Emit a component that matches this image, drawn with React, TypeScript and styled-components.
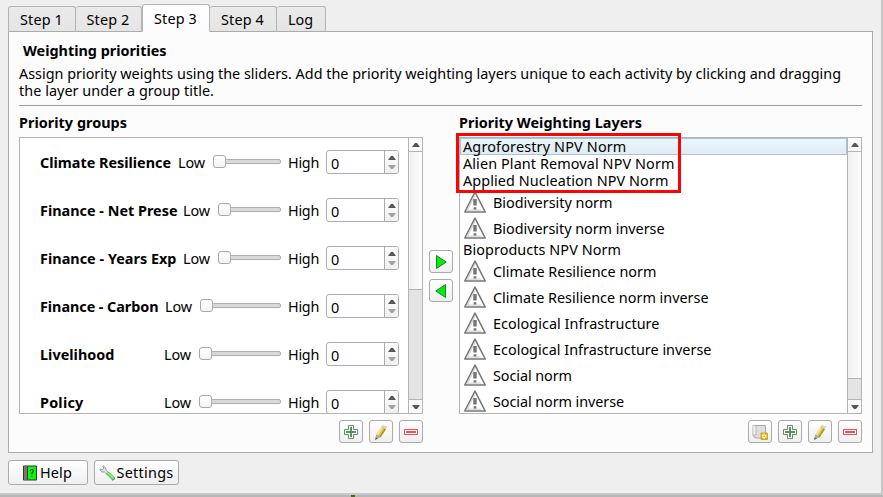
import React, { useLayoutEffect, useRef, useState } from "react";
import styled, { createGlobalStyle } from "styled-components";

const GlobalStyle = createGlobalStyle`
  * { box-sizing: border-box; }
  body { margin: 0; background: #efefef; overflow: hidden; }
  button { padding: 0; font: inherit; color: inherit; }
`;

const Window = styled.div`
  width: 883px;
  height: 497px;
  display: flex;
  flex-direction: column;
  background: #efefef;
  border-right: 2px solid #c6c6c6;
  color: #000;
  font-family: "Noto Sans", "Open Sans", sans-serif;
  font-size: 14.4px;
  line-height: 17px;
`;

const TextSpan = styled.span<{ $bold?: boolean }>`
  display: inline-block;
  flex: none;
  white-space: pre;
  font-weight: ${(p) => (p.$bold ? 700 : 400)};
`;

/* Tracks its text so that the line takes the given width. */
function Label({ text, width, bold }: { text: string; width: number; bold?: boolean }) {
  const ref = useRef<HTMLSpanElement>(null);
  const [spacing, setSpacing] = useState(0);
  useLayoutEffect(() => {
    if (ref.current) {
      const natural = ref.current.getBoundingClientRect().width;
      setSpacing((width - natural) / text.length);
    }
  }, [text, width]);
  return (
    <TextSpan ref={ref} $bold={bold} style={{ letterSpacing: spacing }}>
      {text}
    </TextSpan>
  );
}

const TabBar = styled.nav`
  display: flex;
  align-items: flex-end;
  height: 32px;
  padding-left: 8px;
  flex: none;
  margin-bottom: -1px;
`;

const Tab = styled.div<{ $w: number; $active?: boolean; $first?: boolean }>`
  width: ${(p) => p.$w}px;
  height: ${(p) => (p.$active ? 28 : 26)}px;
  padding: ${(p) => (p.$active ? 5 : 4)}px 1px 0 0;
  display: flex;
  justify-content: center;
  align-items: flex-start;
  border: 1px solid #b4b4b4;
  border-left-width: ${(p) => (p.$first || p.$active ? 1 : 0)}px;
  border-bottom-color: ${(p) => (p.$active ? "#fcfcfc" : "#ababab")};
  border-radius: 3px 3px 0 0;
  background: ${(p) => (p.$active ? "linear-gradient(#fff, #fcfcfc)" : "linear-gradient(#eaeaea, #e5e5e5)")};
  z-index: 1;
`;

const Panel = styled.main`
  width: 865px;
  height: 422px;
  flex: none;
  margin-left: 8px;
  padding: 10px 10px 0;
  border: 1px solid #ababab;
  background: #fcfcfc;
  display: flex;
  flex-direction: column;
`;

const Title = styled.h1`
  margin: 0 0 6px 4px;
  font-size: inherit;
  height: 17px;
`;

const Description = styled.p`
  margin: 0;
  display: flex;
  flex-direction: column;
  align-items: flex-start;
  height: 41px;
  border-bottom: 1px solid #9c9c9c;
`;

const Columns = styled.div`
  display: flex;
  margin-top: 8px;
`;

const Column = styled.section<{ $w: number }>`
  width: ${(p) => p.$w}px;
  flex: none;
`;

const Heading = styled.h2`
  margin: 0;
  height: 23px;
  font-size: inherit;
`;

const ListFrame = styled.div`
  display: flex;
  height: 277px;
  border: 1px solid #b4b4b4;
  background: #fff;
  overflow: hidden;
`;

const ListBody = styled.div`
  flex: 1;
  min-width: 0;
  overflow: hidden;
`;

const GroupRow = styled.div`
  height: 48px;
  padding-left: 20px;
  display: flex;
  align-items: center;
`;

const GroupName = styled.div<{ $w: number }>`
  width: ${(p) => p.$w}px;
  flex: none;
`;

const Slider = styled.div`
  flex: 1;
  display: flex;
  align-items: center;
  height: 13px;
  margin: -1px 7px 0 8px;
`;

const Knob = styled.div`
  width: 13px;
  height: 13px;
  flex: none;
  border: 1px solid #a8a8a8;
  border-radius: 3px;
  background: linear-gradient(#fff, #f3f3f3);
`;

const Track = styled.div`
  flex: 1;
  height: 5px;
  margin-left: -1px;
  border: 1px solid #b0b0b0;
  border-radius: 0 2px 2px 0;
  background: #d9d9d9;
`;

const Spin = styled.div`
  display: flex;
  width: 73px;
  height: 24px;
  flex: none;
  margin: 0 9px 0 7px;
  border: 1px solid #acacac;
  border-radius: 3px;
  background: #fff;
  overflow: hidden;
`;

const SpinValue = styled.div`
  flex: 1;
  padding: 4px 0 0 4px;
`;

const SpinButtons = styled.div`
  width: 14px;
  border-left: 1px solid #acacac;
  background: linear-gradient(#fdfdfd, #f0f0f0);
  display: flex;
  flex-direction: column;
  align-items: center;
  gap: 5px;
  padding-top: 5px;
`;

const Scroll = styled.div`
  width: 14px;
  flex: none;
  border-left: 1px solid #b4b4b4;
  display: flex;
  flex-direction: column;
  background: #e4e4e4;
`;

const ScrollButton = styled.div`
  height: 14px;
  flex: none;
  display: flex;
  align-items: center;
  justify-content: center;
  background: #fbfbfb;
  &:first-child { border-bottom: 1px solid #b4b4b4; }
  &:last-child { border-top: 1px solid #b4b4b4; }
`;

const Thumb = styled.div<{ $h: number }>`
  height: ${(p) => p.$h}px;
  border-bottom: 1px solid #b4b4b4;
  background: linear-gradient(90deg, #f0f0f0, #fdfdfd);
`;

const Trough = styled.div`
  flex: 1;
`;

const ToolRow = styled.div`
  display: flex;
  justify-content: flex-end;
  gap: 6px;
  margin-top: 6px;
`;

const Button = styled.button<{ $w?: number; $h?: number }>`
  width: ${(p) => p.$w ?? 24}px;
  height: ${(p) => p.$h ?? 23}px;
  flex: none;
  display: flex;
  align-items: center;
  justify-content: center;
  border: 1px solid #aaa;
  border-radius: 3px;
  background: linear-gradient(#fff, #efefef);
`;

const Transfer = styled.div`
  width: 36px;
  flex: none;
  padding: 136px 0 0 6px;
  display: flex;
  flex-direction: column;
  gap: 6px;
`;

const LayerColumn = styled(Column)`
  position: relative;
`;

const Highlight = styled.div`
  position: absolute;
  left: -3px;
  top: 19px;
  width: 225px;
  height: 60px;
  border: 3px solid #fa0505;
`;

const LayerRow = styled.div<{ $icon?: boolean; $selected?: boolean }>`
  height: ${(p) => (p.$icon ? 26 : 17)}px;
  display: flex;
  align-items: center;
  gap: 6px;
  padding-left: ${(p) => (p.$selected ? 2 : 3)}px;
  border: ${(p) => (p.$selected ? "1px solid #abc3d6" : "none")};
  background: ${(p) => (p.$selected ? "linear-gradient(#e8f6ff, #e2ebf2)" : "none")};
`;

const Footer = styled.footer`
  display: flex;
  gap: 6px;
  height: 40px;
  padding: 7px 0 0 8px;
`;

const FooterContent = styled.span`
  display: flex;
  align-items: center;
  gap: 2px;
  margin-right: 1px;
`;

const WindowEdge = styled.div`
  height: 4px;
  flex: none;
  width: 883px;
  border-top: 2px solid #c8c8c8;
  background: #b7b7b7;
  padding-left: 351px;
`;

const EdgeMark = styled.div`
  width: 4px;
  height: 2px;
  background: #4c6a14;
`;

const Arrow = ({ down, dim }: { down?: boolean; dim?: boolean }) => (
  <svg width="8" height="4" viewBox="0 0 8 4">
    <path d={down ? "M0 0H8L5 4H3Z" : "M0 4H8L5 0H3Z"} fill={dim ? "#a0a0a0" : "#555"} />
  </svg>
);

const WarningIcon = () => (
  <svg width="24" height="24" viewBox="0 0 24 24">
    <path d="M12 2.2 22.2 22H1.8Z" fill="#fff" stroke="#777" strokeWidth="1.6" strokeLinejoin="round" />
    <path d="M12 5.2 4.3 20.2H18" fill="none" stroke="#d5d5d5" strokeWidth="1.2" />
    <path d="M10.3 9H13.7V15.5H10.3Z M10.6 17.2H13.4V19.6H10.6Z" fill="#757575" />
  </svg>
);

const PlusIcon = () => (
  <svg width="16" height="16" viewBox="0 0 16 16">
    <path d="M5.5 1.5H10.5V5.5H14.5V10.5H10.5V14.5H5.5V10.5H1.5V5.5H5.5Z" fill="#fff" stroke="#5b905b" />
    <path d="M7 3H9V7H13V9H9V13H7V9H3V7H7Z" fill="#5b905b" />
  </svg>
);

const MinusIcon = () => (
  <svg width="16" height="16" viewBox="0 0 16 16">
    <rect x="1.5" y="5.5" width="13" height="5" fill="#fff" stroke="#f05050" />
    <rect x="3" y="7" width="10" height="2" fill="#f05050" />
  </svg>
);

const PencilIcon = () => (
  <svg width="16" height="16" viewBox="0 0 16 16">
    <path d="M9.8 1.2 14 2.8 7.4 13 2.2 16 3.2 10.8Z" fill="#d8c64b" />
    <path d="M9.8 1.2 14 2.8 13 4.7 8.7 2.9Z" fill="#d9d5cf" />
    <path d="M9 4 4.2 11.3" stroke="#f4eaa0" strokeWidth="1.5" />
    <path d="M12.3 5 7 13" stroke="#a99422" strokeWidth="1.4" />
    <path d="M3.2 10.8 5 11.2 7.4 13 2.2 16Z" fill="#aaa" />
    <path d="M2.8 13.4 4.8 14.6 2.2 16Z" fill="#666" />
  </svg>
);

const LayerIcon = () => (
  <svg width="16" height="16" viewBox="0 0 16 16">
    <path d="M1 1.5H13.5V14H4.5Q1.5 14 1 11Z" fill="#dedede" stroke="#aaa" />
    <path d="M1 1.5H4V11H1.5" fill="#eee" stroke="#b7b7b7" />
    <rect x="8.5" y="8.5" width="7.5" height="7.5" rx="1" fill="#cfa914" />
    <path d="M12.2 9.6V14.8M9.9 10.9 14.5 13.5M9.9 13.5 14.5 10.9" stroke="#fff7cc" strokeWidth="1.3" />
    <circle cx="12.2" cy="12.2" r=".8" fill="#cfa914" />
  </svg>
);

const TransferIcon = ({ left }: { left?: boolean }) => (
  <svg width="16" height="16" viewBox="0 0 16 16">
    <path d={left ? "M12.5 1.5V14.5L2.8 8Z" : "M3.5 1.5V14.5L13.2 8Z"} fill="#00ed10" stroke="#168a1c" />
  </svg>
);

const HelpIcon = () => (
  <svg width="15" height="16" viewBox="0 0 15 16">
    <path d="M.5 1H13.5V15H.5Z" fill="#06f910" stroke="#333" />
    <path d="M1 1.5H4V14.5H1Z" fill="#85736b" />
    <path d="M4.5 1V15" stroke="#3c443c" />
    <path d="M7.2 6Q7.2 4.5 8.8 4.5T10.4 6Q10.4 7 9.5 7.6Q8.8 8 8.8 9.3" fill="none" stroke="#174a19" strokeWidth="1.2" />
    <path d="M8.2 10.5H9.5V11.8H8.2Z" fill="#174a19" />
  </svg>
);

const WrenchIcon = () => (
  <svg width="16" height="16" viewBox="0 0 16 16">
    <path d="M1.2 5.3Q2.5 7.8 5.3 6.9L9.3 10.5 10.9 8.9 7 5.2Q7.4 2.2 4.4 1L3.7 1.4 4.9 3.2 3.3 4.9 1.2 4Z" fill="#e8e8e8" stroke="#909090" strokeWidth=".9" />
    <path d="M7 8.8 9.5 6.4 16 12.5Q15.6 15 13.4 15.4Z" fill="#55cf4d" />
    <path d="M8.8 8 14.6 13.3" stroke="#9af28e" strokeWidth="1.2" />
    <path d="M13.4 15.2Q15.5 14.8 15.8 12.7" fill="none" stroke="#4b8b46" />
  </svg>
);

const ScrollBar = ({ thumb }: { thumb: number }) => (
  <Scroll>
    <ScrollButton><Arrow /></ScrollButton>
    <Thumb $h={thumb} />
    <Trough />
    <ScrollButton><Arrow down /></ScrollButton>
  </Scroll>
);

const tabs = [
  { text: "Step 1", width: 43, box: 68, first: true },
  { text: "Step 2", width: 43, box: 66 },
  { text: "Step 3", width: 43, box: 68, active: true },
  { text: "Step 4", width: 43, box: 67 },
  { text: "Log", width: 25, box: 49 },
];

const groups = [
  { text: "Climate Resilience", width: 131, column: 138 },
  { text: "Finance - Net Prese", width: 137.5, column: 143 },
  { text: "Finance - Years Exp", width: 136.5, column: 143 },
  { text: "Finance - Carbon", width: 118.5, column: 125 },
  { text: "Livelihood", width: 74.5, column: 124 },
  { text: "Policy", width: 43.5, column: 124 },
];

const layers = [
  { text: "Agroforestry NPV Norm", width: 163.5, selected: true },
  { text: "Alien Plant Removal NPV Norm", width: 211.5 },
  { text: "Applied Nucleation NPV Norm", width: 205.5 },
  { text: "Biodiversity norm", width: 119.5, icon: true },
  { text: "Biodiversity norm inverse", width: 171.5, icon: true },
  { text: "Bioproducts NPV Norm", width: 158 },
  { text: "Climate Resilience norm", width: 163.5, icon: true },
  { text: "Climate Resilience norm inverse", width: 215.5, icon: true },
  { text: "Ecological Infrastructure", width: 166.5, icon: true },
  { text: "Ecological Infrastructure inverse", width: 218.5, icon: true },
  { text: "Social norm", width: 79, icon: true },
  { text: "Social norm inverse", width: 131, icon: true },
];

export default function App() {
  return (
    <>
      <GlobalStyle />
      <Window>
        <TabBar>
          {tabs.map((t) => (
            <Tab key={t.text} $w={t.box} $active={t.active} $first={t.first}>
              <Label text={t.text} width={t.width} />
            </Tab>
          ))}
        </TabBar>
        <Panel>
          <Title><Label bold text="Weighting priorities" width={143.5} /></Title>
          <Description>
            <Label text="Assign priority weights using the sliders. Add the priority weighting layers unique to each activity by clicking and dragging" width={822} />
            <Label text="the layer under a group title." width={195} />
          </Description>
          <Columns>
            <Column $w={404}>
              <Heading><Label bold text="Priority groups" width={108} /></Heading>
              <ListFrame>
                <ListBody>
                  {groups.map((g) => (
                    <GroupRow key={g.text}>
                      <GroupName $w={g.column}><Label bold text={g.text} width={g.width} /></GroupName>
                      <Label text="Low" width={27} />
                      <Slider><Knob /><Track /></Slider>
                      <Label text="High" width={31} />
                      <Spin>
                        <SpinValue>0</SpinValue>
                        <SpinButtons><Arrow /><Arrow down dim /></SpinButtons>
                      </Spin>
                    </GroupRow>
                  ))}
                </ListBody>
                <ScrollBar thumb={138} />
              </ListFrame>
              <ToolRow>
                <Button><PlusIcon /></Button>
                <Button><PencilIcon /></Button>
                <Button><MinusIcon /></Button>
              </ToolRow>
            </Column>
            <Transfer>
              <Button><TransferIcon /></Button>
              <Button><TransferIcon left /></Button>
            </Transfer>
            <LayerColumn $w={403}>
              <Heading><Label bold text="Priority Weighting Layers" width={183} /></Heading>
              <ListFrame>
                <ListBody>
                  {layers.map((l) => (
                    <LayerRow key={l.text} $icon={l.icon} $selected={l.selected}>
                      {l.icon && <WarningIcon />}
                      <Label text={l.text} width={l.width} />
                    </LayerRow>
                  ))}
                </ListBody>
                <ScrollBar thumb={227} />
              </ListFrame>
              <ToolRow>
                <Button><LayerIcon /></Button>
                <Button><PlusIcon /></Button>
                <Button><PencilIcon /></Button>
                <Button><MinusIcon /></Button>
              </ToolRow>
              <Highlight />
            </LayerColumn>
          </Columns>
        </Panel>
        <Footer>
          <Button $w={80} $h={25}>
            <FooterContent><HelpIcon /><Label text="Help" width={32} /></FooterContent>
          </Button>
          <Button $w={85} $h={25}>
            <FooterContent><WrenchIcon /><Label text="Settings" width={57} /></FooterContent>
          </Button>
        </Footer>
        <WindowEdge><EdgeMark /></WindowEdge>
      </Window>
    </>
  );
}
